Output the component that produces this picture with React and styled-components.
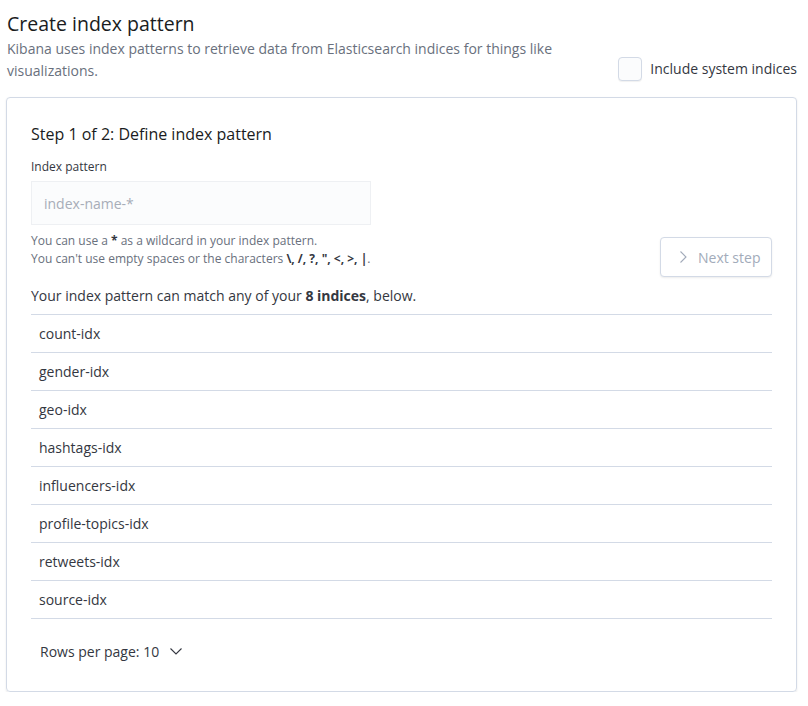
import React from "react";
import styled, { createGlobalStyle } from "styled-components";

const Global = createGlobalStyle`
  body {
    margin: 0;
    background: #ffffff;
    font-family: "Open Sans", "Noto Sans", sans-serif;
    color: #343741;
  }
  * { box-sizing: border-box; }
`;

const Page = styled.div`
  width: 797px;
  padding: 10px 0 0 6px;
`;

const Header = styled.header`
  display: flex;
  justify-content: space-between;
  align-items: flex-end;
  padding-left: 1px;
`;

const HeaderText = styled.div`
  width: 560px;
`;

const Title = styled.h1`
  margin: 0;
  font-size: 19.5px;
  font-weight: 400;
  line-height: 28px;
  color: #1a1c21;
`;

const Description = styled.p`
  margin: 0;
  font-size: 14px;
  line-height: 22px;
  color: #69707d;
`;

const CheckLabel = styled.label`
  display: flex;
  align-items: center;
  gap: 8px;
  font-size: 14px;
  line-height: 20px;
  color: #343741;
  margin-bottom: 1px;
`;

const CheckBox = styled.span`
  width: 24px;
  height: 24px;
  border: 1px solid #d3dae6;
  border-radius: 4px;
  background: #fbfcfd;
  box-shadow: 0 1px 1px rgba(0, 0, 0, 0.06);
`;

const Panel = styled.section`
  margin-top: 15px;
  border: 1px solid #d3dae6;
  border-radius: 4px;
  box-shadow: 0 1px 2px rgba(0, 0, 0, 0.1);
  padding: 25px 24px 24px;
`;

const StepTitle = styled.h2`
  margin: 0;
  font-size: 16px;
  font-weight: 400;
  line-height: 22px;
  color: #1a1c21;
`;

const FormRow = styled.div`
  display: flex;
  justify-content: space-between;
  align-items: flex-end;
  margin-top: 13px;
`;

const Field = styled.div`
  display: flex;
  flex-direction: column;
  padding-bottom: 9px;
`;

const FieldLabel = styled.label`
  font-size: 12px;
  line-height: 18px;
  color: #343741;
  margin-bottom: 5px;
`;

const Input = styled.input`
  width: 340px;
  height: 44px;
  padding: 0 12px;
  border: 1px solid #eef0f3;
  border-radius: 0;
  background: #fbfcfd;
  font-family: inherit;
  font-size: 14px;
  color: #343741;
  outline: none;
  &::placeholder {
    color: #a7adb8;
  }
`;

const Help = styled.div`
  margin-top: 7px;
  font-size: 12px;
  line-height: 18px;
  color: #69707d;
  b {
    color: #343741;
  }
`;

const NextButton = styled.button`
  display: flex;
  align-items: center;
  gap: 7px;
  width: 112px;
  height: 40px;
  padding: 0 0 0 14px;
  border: 1px solid #d3dae6;
  border-radius: 4px;
  background: #ffffff;
  box-shadow: 0 1px 2px rgba(0, 0, 0, 0.08);
  font-family: inherit;
  font-size: 14px;
  white-space: nowrap;
  color: #a2abba;
  cursor: not-allowed;
`;

const MatchText = styled.p`
  margin: 9px 0 0;
  font-size: 14px;
  line-height: 20px;
  color: #343741;
  b {
    font-weight: 700;
  }
`;

const Table = styled.div`
  margin-top: 8px;
  border-top: 1px solid #d3dae6;
`;

const TableRow = styled.div`
  height: 38px;
  display: flex;
  align-items: center;
  padding: 0 8px;
  border-bottom: 1px solid #d3dae6;
  font-size: 14px;
  color: #343741;
`;

const Pagination = styled.div`
  margin-top: 16px;
  display: flex;
`;

const RowsButton = styled.button`
  display: flex;
  align-items: center;
  gap: 9px;
  height: 32px;
  padding: 0 9px;
  border: none;
  background: transparent;
  font-family: inherit;
  font-size: 14px;
  color: #343741;
`;

const Chevron = ({ dir }) => (
  <svg width="16" height="16" viewBox="0 0 16 16" fill="none">
    {dir === "down" ? (
      <path d="M2.5 5.5l5.5 5.5 5.5-5.5" stroke="currentColor" strokeWidth="1.1" />
    ) : (
      <path d="M5.5 2.5l5.5 5.5-5.5 5.5" stroke="currentColor" strokeWidth="1.1" />
    )}
  </svg>
);

const indices = [
  "count-idx",
  "gender-idx",
  "geo-idx",
  "hashtags-idx",
  "influencers-idx",
  "profile-topics-idx",
  "retweets-idx",
  "source-idx",
];

export default function App() {
  return (
    <>
      <Global />
      <Page>
        <Header>
          <HeaderText>
            <Title>Create index pattern</Title>
            <Description>
              Kibana uses index patterns to retrieve data from Elasticsearch indices for things like
              visualizations.
            </Description>
          </HeaderText>
          <CheckLabel>
            <CheckBox />
            Include system indices
          </CheckLabel>
        </Header>
        <Panel>
          <StepTitle>Step 1 of 2: Define index pattern</StepTitle>
          <FormRow>
            <Field>
              <FieldLabel>Index pattern</FieldLabel>
              <Input placeholder="index-name-*" />
              <Help>
                You can use a <b>*</b> as a wildcard in your index pattern.
                <br />
                You can't use empty spaces or the characters <b>\, /, ?, ", &lt;, &gt;, |</b>.
              </Help>
            </Field>
            <NextButton disabled>
              <Chevron dir="right" />
              Next step
            </NextButton>
          </FormRow>
          <MatchText>
            Your index pattern can match any of your <b>8 indices</b>, below.
          </MatchText>
          <Table>
            {indices.map((name) => (
              <TableRow key={name}>{name}</TableRow>
            ))}
          </Table>
          <Pagination>
            <RowsButton>
              Rows per page: 10
              <Chevron dir="down" />
            </RowsButton>
          </Pagination>
        </Panel>
      </Page>
    </>
  );
}
